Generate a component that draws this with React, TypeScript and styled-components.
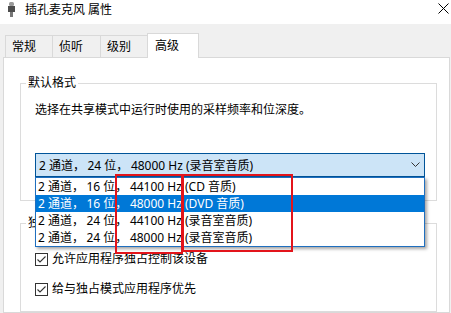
import styled, { createGlobalStyle } from 'styled-components';

const GlobalStyle = createGlobalStyle`
  html, body {
    margin: 0;
    padding: 0;
  }
  body {
    width: 451px;
    height: 313px;
    overflow: hidden;
    background: #f0f0f0;
    color: #000;
    font-family: 'Noto Sans', 'Noto Sans CJK SC', sans-serif;
    font-size: 12px;
  }
  * {
    box-sizing: border-box;
  }
`;

const formats = [
  { text: '2 通道，16 位，44100 Hz (CD 音质)', selected: false },
  { text: '2 通道，16 位，48000 Hz (DVD 音质)', selected: true },
  { text: '2 通道，24 位，44100 Hz (录音室音质)', selected: false },
  { text: '2 通道，24 位，48000 Hz (录音室音质)', selected: false },
];

const tabs = [
  { label: '常规', width: 48 },
  { label: '侦听', width: 49 },
  { label: '级别', width: 48 },
  { label: '高级', width: 52, active: true },
];

// the Windows font leaves a little more room after the full-width comma
function FormatText({ text }: { text: string }) {
  const parts = text.split('，');
  return (
    <>
      {parts.map((p, i) => (
        <span key={i}>
          {p}
          {i < parts.length - 1 ? <Comma>，</Comma> : null}
        </span>
      ))}
    </>
  );
}

function CheckBox() {
  return (
    <svg width="13" height="13" viewBox="0 0 13 13">
      <rect x="0.5" y="0.5" width="12" height="12" fill="#fff" stroke="#333" />
      <polyline
        points="2.5,6.5 5,9 10.5,3.5"
        fill="none"
        stroke="#333"
        strokeWidth="1.1"
      />
    </svg>
  );
}

export default function App() {
  return (
    <>
      <GlobalStyle />
      <Window>
        <TitleBar>
          <svg width="7" height="15" viewBox="0 0 7 15">
            <rect x="1" y="0" width="5" height="4" rx="1.5" fill="#9a9a9a" />
            <rect x="0" y="4" width="7" height="6" fill="#4d4d4d" />
            <rect x="2" y="10" width="3" height="5" fill="#777" />
          </svg>
          <Title>插孔麦克风 属性</Title>
          <CloseIcon width="11" height="11" viewBox="0 0 11 11">
            <path d="M0.5 0.5 L10.5 10.5 M10.5 0.5 L0.5 10.5" stroke="#000" strokeWidth="1" />
          </CloseIcon>
        </TitleBar>
        <Body>
          <TabRow>
            {tabs.map((t) => (
              <Tab key={t.label} $width={t.width} $active={!!t.active}>
                {t.label}
              </Tab>
            ))}
          </TabRow>
          <Panel>
            <Group>
              <Legend>默认格式</Legend>
              <GroupBody $pad="11px 0 23px 14px">
                <Description>选择在共享模式中运行时使用的采样频率和位深度。</Description>
                <ComboWrap>
                  <Combo>
                    <span>
                      <FormatText text="2 通道，24 位，48000 Hz (录音室音质)" />
                    </span>
                    <svg width="9" height="5" viewBox="0 0 9 5">
                      <polyline points="0.5,0.5 4.5,4.5 8.5,0.5" fill="none" stroke="#333" />
                    </svg>
                  </Combo>
                  <DropList>
                    {formats.map((f) => (
                      <Option key={f.text} $selected={f.selected}>
                        <FormatText text={f.text} />
                      </Option>
                    ))}
                  </DropList>
                  <Mark $left={80} $width={68} $height={80} />
                  <Mark $left={147} $width={111} $height={78} />
                </ComboWrap>
              </GroupBody>
            </Group>
            <Group $gap>
              <Legend>独占模式</Legend>
              <GroupBody $pad="20px 0 14px 14px">
                <CheckRow>
                  <CheckBox />
                  <span>允许应用程序独占控制该设备</span>
                </CheckRow>
                <CheckRow>
                  <CheckBox />
                  <span>给与独占模式应用程序优先</span>
                </CheckRow>
              </GroupBody>
            </Group>
          </Panel>
        </Body>
      </Window>
    </>
  );
}

const Window = styled.div`
  display: flex;
  flex-direction: column;
  height: 313px;
`;

const TitleBar = styled.div`
  display: flex;
  align-items: flex-start;
  height: 24px;
  padding: 2px 2px 0 8px;
  background: #fff;
`;

const Title = styled.span`
  margin-left: 10px;
  line-height: 16px;
`;

const CloseIcon = styled.svg`
  margin-left: auto;
  margin-top: 1px;
`;

const Body = styled.div`
  flex: 1;
  display: flex;
  flex-direction: column;
  padding: 9px 1px 0 3px;
  min-height: 0;
`;

const TabRow = styled.div`
  display: flex;
  align-items: flex-end;
  height: 24px;
  padding-left: 2px;
`;

const Tab = styled.div<{ $width: number; $active: boolean }>`
  display: flex;
  align-items: center;
  width: ${(p) => p.$width}px;
  height: ${(p) => (p.$active ? 25 : 22)}px;
  margin-bottom: ${(p) => (p.$active ? -1 : 0)}px;
  padding: 0 0 ${(p) => (p.$active ? 2 : 1)}px ${(p) => (p.$active ? 7 : 6)}px;
  border: 1px solid #d9d9d9;
  border-bottom: none;
  background: ${(p) => (p.$active ? '#fff' : '#f0f0f0')};
  position: relative;
  z-index: ${(p) => (p.$active ? 2 : 1)};
  & + & {
    margin-left: -1px;
  }
`;

const Panel = styled.div`
  flex: 1;
  background: #fff;
  border: 1px solid #d9d9d9;
  padding: 17px 12px 0 16px;
`;

const Group = styled.fieldset<{ $gap?: boolean }>`
  margin: ${(p) => (p.$gap ? '14px 0 0' : '0')};
  padding: 0;
  min-width: 0;
  border: 1px solid #dcdcdc;
`;

const Legend = styled.legend`
  margin-left: 5px;
  padding: 0 2px;
  line-height: 16px;
`;

const GroupBody = styled.div<{ $pad: string }>`
  padding: ${(p) => p.$pad};
`;

const Description = styled.div`
  line-height: 16px;
`;

const ComboWrap = styled.div`
  position: relative;
  margin-top: 35px;
  width: 390px;
`;

const Combo = styled.div`
  display: flex;
  align-items: center;
  justify-content: space-between;
  height: 24px;
  padding: 0 4px 1px 3px;
  border: 1px solid #005499;
  background: #cce4f7;
  white-space: nowrap;
`;

const Comma = styled.span`
  margin-right: 2.5px;
`;

const DropList = styled.div`
  position: absolute;
  top: 24px;
  left: 0;
  width: 390px;
  z-index: 5;
  border: 1px solid #1f6fbf;
  background: #fff;
  box-shadow: 2px 2px 3px rgba(0, 0, 0, 0.35);
`;

const Option = styled.div<{ $selected: boolean }>`
  height: 17px;
  line-height: 17px;
  padding-left: 2px;
  white-space: nowrap;
  background: ${(p) => (p.$selected ? '#0078d7' : '#fff')};
  color: ${(p) => (p.$selected ? '#fff' : '#000')};
`;

const Mark = styled.div<{ $left: number; $width: number; $height: number }>`
  position: absolute;
  top: 21px;
  left: ${(p) => p.$left}px;
  width: ${(p) => p.$width}px;
  height: ${(p) => p.$height}px;
  border: 2px solid #e3141b;
  z-index: 6;
`;

const CheckRow = styled.div`
  display: flex;
  align-items: center;
  gap: 4px;
  height: 16px;
  line-height: 16px;
  & + & {
    margin-top: 14px;
  }
`;
